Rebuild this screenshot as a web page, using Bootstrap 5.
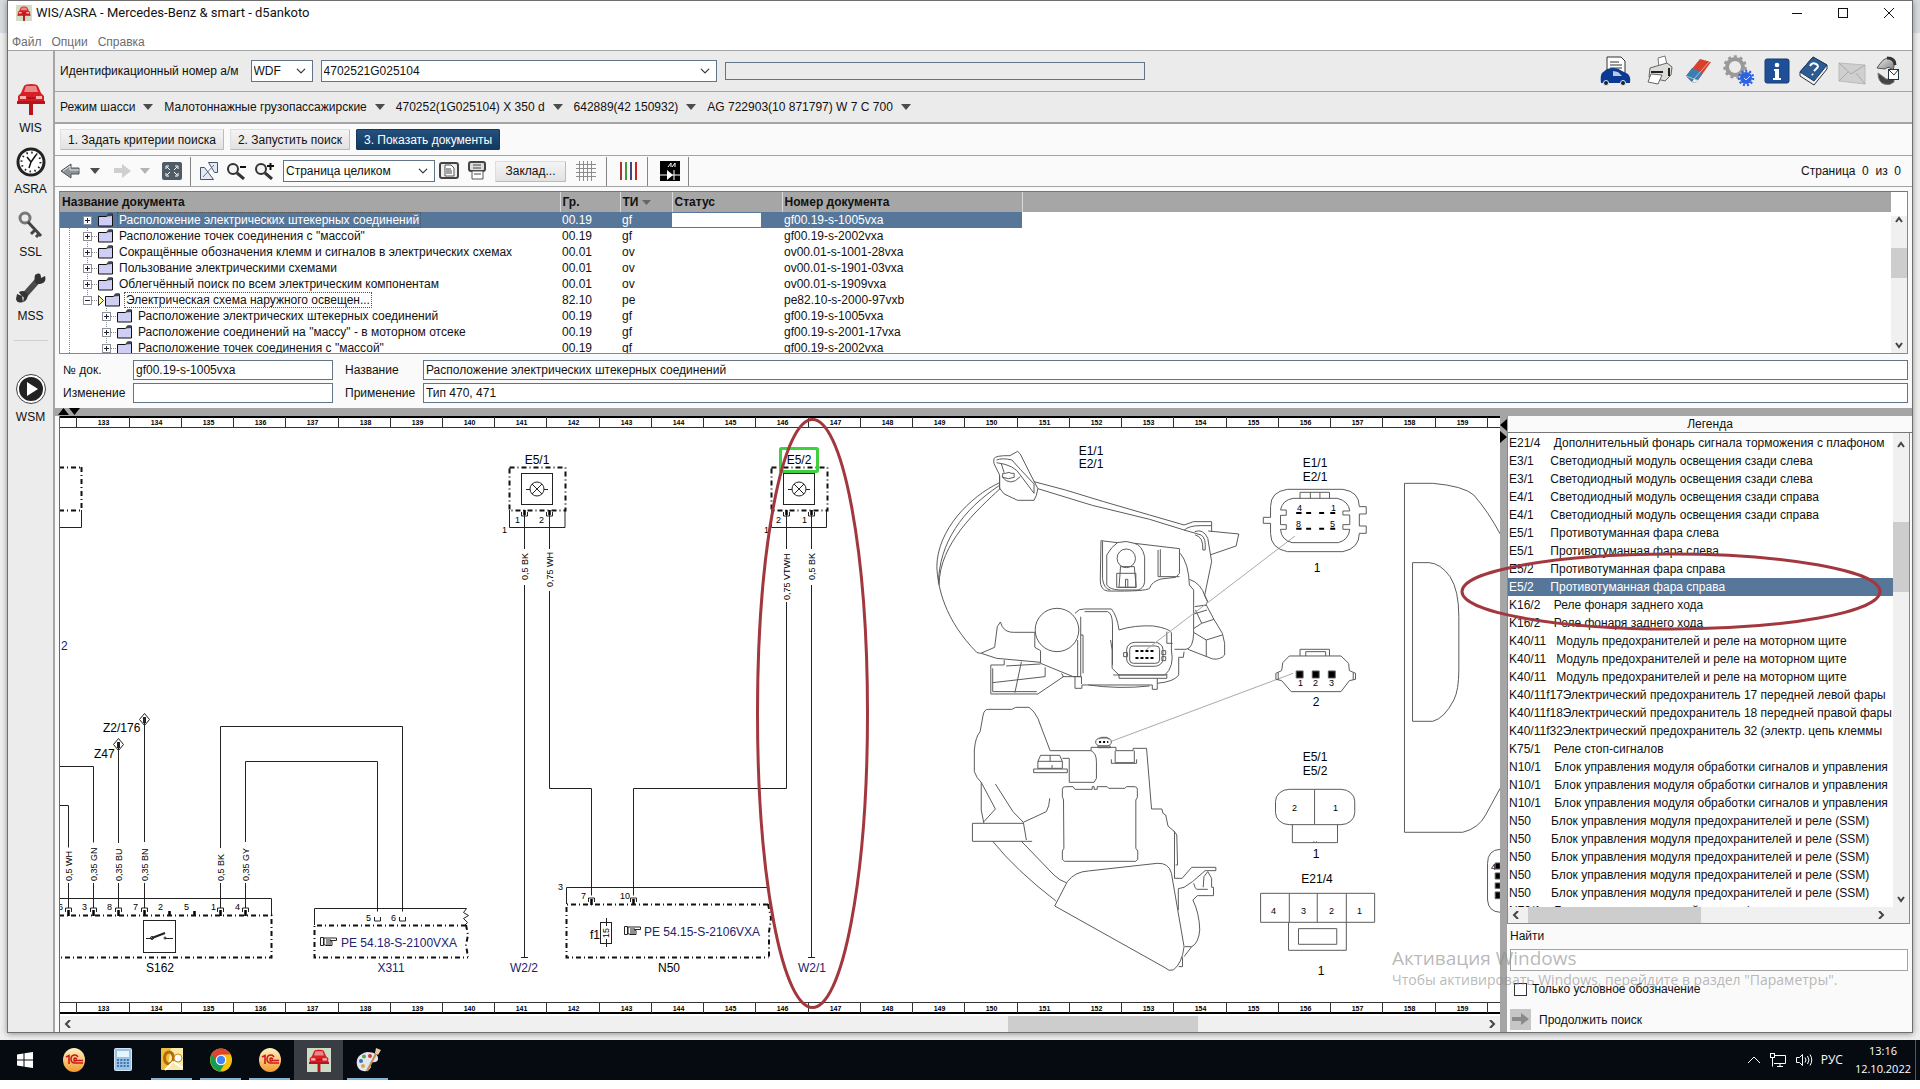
<!DOCTYPE html>
<html lang="ru">
<head>
<meta charset="utf-8">
<meta name="viewport" content="width=device-width, initial-scale=1">
<title>WIS/ASRA - Mercedes-Benz &amp; smart - d5ankoto</title>
<link href="https://cdn.jsdelivr.net/npm/bootstrap@5.3.0/dist/css/bootstrap.min.css" rel="stylesheet">
<style>
:root{--ui:"Liberation Sans",Arial,sans-serif;--seg:"Open Sans","Noto Sans",sans-serif;--line:#a3a5a5;--sel:#57779a}
body{font-family:var(--ui);font-size:12px;line-height:16px;color:#111;height:100vh;min-height:800px;overflow:hidden;background:#fff;position:relative}
.desk{background:linear-gradient(#d8dbde 33px,#efefef 33px);padding:0 7px 7px}
.win{border:1px solid #6e6e6e;background:#fafafa;box-shadow:0 1px 6px #0006;min-height:0}
.titlebar{height:32px;background:#fff;font:13px/20px Roboto,var(--seg);padding:0 12px 8px 8px;flex:none}
.menubar{height:18px;background:#fff;border-bottom:1px solid var(--line);padding-left:4px;gap:10px;flex:none}
.menubar a{color:#6d6d6d;text-decoration:none}
.winbtn,.flat{border:0;background:none;padding:0;display:flex;align-items:center;justify-content:center;color:inherit}
.shell,.legend-rows{min-height:0}
.side{width:47px;background:#ececec;border-right:2px solid #a5a5a5;padding-top:26px;flex:none}
.side button{height:63px;width:100%;flex-direction:column;gap:4px}
.side hr{width:34px;margin:11px auto 26px;border-color:#777}
.main{min-width:0;min-height:0}
.bar{padding:0 11px 0 5px;flex:none}
.bar-vin{height:41px;background:#ebebeb;border-bottom:1px solid var(--line)}
.bar-car{height:32px;background:#ebebeb;border-bottom:2px solid var(--line);gap:11px}
.bar-step{height:32px;border-bottom:1px solid var(--line);gap:6px}
.bar-tool{height:31px;border-bottom:1px solid var(--line)}
.bar-car button{gap:8px}
.topicons{gap:9px}
.form-select,.form-control{border-radius:0;border:1px solid #627487;font:12px/16px var(--ui);color:#111;padding:0 2px;min-height:0;height:20px;background-color:#fff}
.form-select{height:22px;padding:0 20px 0 2px;background-position:right 6px center;background-size:10px 10px}
.vin-kind{width:62px}.vin-code{width:396px}.vin-note{width:420px;height:18px;background:#ebebeb!important}
.zoomsel{width:152px}
.step,.mark-btn{border:1px solid #dedede;border-right-color:#bbb;border-bottom-color:#bbb;background:linear-gradient(#f4f4f4,#e2e2e2);height:21px;padding:0 7px;font-size:12px;line-height:18px;color:#111;border-radius:1px}
.mark-btn{width:71px}
.step.on{background:linear-gradient(#24507c,#123a60);color:#fff;border-color:#123a60}
.vsep{width:1px;height:29px;background:#858585}
.docs{margin:4px 4px 0;height:163px;border:1px solid #85898c;border-top-color:#777;background:#fff;flex:none}
.docs-view{overflow:hidden;min-width:0}
.doctable{table-layout:fixed;width:100%;border-collapse:collapse}
.doctable th{background:#a6a6a6;height:20px;padding:0 2px;font-weight:700;border-right:1px solid #d8d8d8;line-height:19px}
.doctable th:last-child{border:0}
.doctable td{height:16px;padding:0 2px;white-space:nowrap;line-height:16px}
.doctable td:first-child{padding:0}
.treecell{display:flex;height:16px}
.doctable .picked td{background:var(--sel);color:#fff}
.doctable .picked td:last-child{background:#fff}
.dots{outline:1px dotted #555;outline-offset:-1px;padding:0 2px;margin-left:-2px}
.statusbox{display:block;height:14px;width:89px;background:#fff;margin-left:-2px}
.scroll-v{width:16px;background:#f0f0f0;display:flex;flex-direction:column;align-items:center}
.scroll-h{height:16px;background:#f0f0f0;display:flex;align-items:center;flex:none}
.thumb{background:#cdcdcd}
.propgrid{display:grid;grid-template-columns:64px 200px 78px 1fr;gap:3px 6px;padding:6px 4px 5px 8px;align-items:center;flex:none}
.propgrid label{line-height:16px;white-space:nowrap}
.propgrid label.far{padding-left:6px}
.splitter{height:8px;background:#a5a5a5;padding-left:3px;flex:none}
.work{min-height:0}
.canvas-col{min-width:0;margin-left:4px;border-left:1px solid #666;background:#fff}
.canvas-view{min-height:0;overflow:hidden}
.canvas-view svg{display:block;width:100%;height:100%}
.split-v{width:7px;background:#a5a5a5;flex:none}
.legend{width:405px;flex:none;background:#fafafa}
.legend-head{height:17px;line-height:17px;border-bottom:1px solid #777;border-left:1px solid #999;text-align:center;flex:none}
.legend-box{border:1px solid #85898c;border-top:0;min-height:0;margin-right:2px;background:#f0f0f0}
.legend-list{list-style:none;margin:0;padding:1px 0 0;background:#fff;overflow:hidden;min-width:0}
.legend-list li{white-space:pre;height:18px;line-height:18px;padding-left:1px;flex:none;overflow:hidden}
.legend-list .on{background:var(--sel);color:#fff}
.finder{height:108px;padding:4px 4px 4px 3px;flex:none}
.finder .form-control{height:22px;border-color:#a3a3a3;margin:5px 0 10px}
.tick{appearance:none;width:13px;height:13px;border:1px solid #333;background:#fff;margin:0 5px 0 4px}
.next{width:21px;height:21px;background:#c6c6c6}
.taskbar{height:40px;background:#060a11;color:#fff;font-family:var(--seg);flex:none;margin-bottom:9px}
.task{width:49px;height:40px;position:relative}
.task.open::after{content:"";position:absolute;left:4px;right:4px;bottom:0;height:2px;background:#87b4d2}
.task.now{background:#3a3e43}
.clock{font-size:11px;line-height:18px;text-align:center}
.deskedge{width:5px;height:40px;border-left:1px solid #555}
.over{position:absolute;inset:0;width:100%;height:100%;pointer-events:none}
svg{flex:none}
svg text{font-family:var(--ui)}
.wires text{font-size:12px}
.wires .s text{font-size:9px}
.wires .r{font-size:7px;font-weight:700;text-anchor:middle}
.wires .b{fill:#22226e}
.wires .m{text-anchor:middle}
.art path,.art rect,.art ellipse{vector-effect:non-scaling-stroke}
.over .wm{font-family:var(--seg);fill:#8c8c8c;fill-opacity:.62}
</style>
<script src="https://cdn.jsdelivr.net/npm/bootstrap@5.3.0/dist/js/bootstrap.bundle.min.js"></script>
</head>
<body class="d-flex flex-column">

<svg width="0" height="0" class="position-absolute" aria-hidden="true">
  <defs>
    <linearGradient id="steel" x1="0" y1="0" x2="1" y2="1"><stop offset="0" stop-color="#eee"/><stop offset="1" stop-color="#777"/></linearGradient>
    <linearGradient id="org" x1="0" y1="0" x2="0" y2="1"><stop offset="0" stop-color="#fff3c4"/><stop offset="1" stop-color="#f39a2c"/></linearGradient>
    <symbol id="fold" viewBox="0 0 16 16"><path d="M1 4.500h8l2-2.500h4v12H1z" fill="#cfcff5" stroke="#111"/><path d="M9 4.500l2-3h4v2.500z" fill="#445"/></symbol>
    <symbol id="plus" viewBox="0 0 9 9"><rect x=".5" y=".5" width="8" height="8" fill="#fff" stroke="#8a8f99"/><path d="M2 4.500h5M4.500 2v5" stroke="#223"/></symbol>
    <symbol id="minus" viewBox="0 0 9 9"><rect x=".5" y=".5" width="8" height="8" fill="#fff" stroke="#8a8f99"/><path d="M2 4.500h5" stroke="#223"/></symbol>
    <symbol id="n0" viewBox="0 0 59 16"><use href="#plus" x="23" y="4" width="9" height="9"/><use href="#fold" x="37" width="17" height="16"/></symbol>
    <symbol id="n1" viewBox="0 0 59 16"><path d="M9.500 0v16M27.500 0v16M32 8.500h5" stroke="#888" stroke-dasharray="1 1"/><use href="#plus" x="23" y="4" width="9" height="9"/><use href="#fold" x="37" width="17" height="16"/></symbol>
    <symbol id="nopen" viewBox="0 0 66 16"><path d="M9.500 0v16M27.500 0v4M32 8.500h5" stroke="#888" stroke-dasharray="1 1"/><use href="#minus" x="23" y="4" width="9" height="9"/><path d="M38.500 3.500v10l5-5z" fill="#ffff8c" stroke="#333"/><use href="#fold" x="44" width="17" height="16"/></symbol>
    <symbol id="n2" viewBox="0 0 78 16"><path d="M9.500 0v16M46.500 0v16M51 8.500h5" stroke="#888" stroke-dasharray="1 1"/><use href="#plus" x="42" y="4" width="9" height="9"/><use href="#fold" x="56" width="17" height="16"/></symbol>
    <symbol id="dn" viewBox="0 0 10 6"><path d="M0 0h10L5 6z" fill="#4c4c4c"/></symbol>
    <symbol id="lift" viewBox="0 0 28 32"><path d="M4 10L7 3Q8 1 14 1t7 2l3 7 3 3v6H1v-6z" fill="#d81f26"/><path d="M7 9l2-6h10l2 6z" fill="#e98a8a"/><path d="M0 18h28v3H0zM12 21h4v11h-4z" fill="#b5161c"/><path d="M3 13h6v3H3zM19 13h6v3h-6z" fill="#ffb3b3"/><path d="M10 15h8" stroke="#7c0d10"/></symbol>
    <symbol id="onec" viewBox="0 0 22 24"><ellipse cx="11" cy="12" rx="11" ry="12" fill="url(#org)"/><path d="M3 9l3-1.500V16M15 9q-1-2-3-2-4 0-4 4t4 4h8M14 11q-3-2-3 .5t2 1h7" fill="none" stroke="#d0181c" stroke-width="1.600"/></symbol>
    <symbol id="up" viewBox="0 0 8 8"><path d="M1 6l3-4 3 4" fill="none" stroke="#444" stroke-width="2"/></symbol>
    <symbol id="down" viewBox="0 0 8 8"><path d="M1 2l3 4 3-4" fill="none" stroke="#444" stroke-width="2"/></symbol>
    <symbol id="left" viewBox="0 0 8 8"><path d="M6 0L2 4l4 4" fill="none" stroke="#444" stroke-width="2"/></symbol>
    <symbol id="right" viewBox="0 0 8 8"><path d="M2 0l4 4-4 4" fill="none" stroke="#444" stroke-width="2"/></symbol>
  </defs>
</svg>

<div class="desk d-flex flex-column flex-grow-1 overflow-hidden">
<div class="win d-flex flex-column flex-grow-1">
  <header class="titlebar d-flex align-items-center">
    <svg width="16" height="16" class="me-1"><rect width="16" height="16" fill="#d5dcc4"/><use href="#lift" x="1" y="1" width="14" height="15"/></svg>
    <span class="me-auto">WIS/ASRA - Mercedes-Benz &amp; smart - d5ankoto</span>
    <button class="winbtn me-4" aria-label="Свернуть"><svg width="22" height="12"><path d="M6 6.500h10" stroke="#111"/></svg></button>
    <button class="winbtn me-4" aria-label="Развернуть"><svg width="22" height="12"><rect x="6.500" y="1.500" width="9" height="9" fill="none" stroke="#111"/></svg></button>
    <button class="winbtn" aria-label="Закрыть"><svg width="22" height="12"><path d="M6 1l10 10M16 1L6 11" stroke="#111"/></svg></button>
  </header>
  <nav class="menubar d-flex align-items-center"><a href="#">Файл</a><a href="#">Опции</a><a href="#">Справка</a></nav>

  <div class="shell d-flex flex-grow-1">
    <aside class="side">
      <button class="flat"><svg width="30" height="34"><use href="#lift" x="1" y="1" width="28" height="32"/></svg>WIS</button>
      <button class="flat"><svg width="30" height="30"><circle cx="15" cy="15" r="13" fill="#fff" stroke="#222" stroke-width="3"/><circle cx="15" cy="15" r="9.500" fill="none" stroke="#222" stroke-width="2" stroke-dasharray="1.500 3.470"/><path d="M15 15l5-7M15 15l-4-5M15 15l-2 6" stroke="#111" stroke-width="1.500"/></svg>ASRA</button>
      <button class="flat"><svg width="30" height="30"><circle cx="9" cy="8" r="5" fill="none" stroke="#777" stroke-width="3"/><path d="M12 12l13 14M19 20l-4 4M23 24l-3 3" stroke="#444" stroke-width="3"/></svg>SSL</button>
      <button class="flat"><svg width="32" height="32"><path d="M8 25L24 7" stroke="#4a4a4a" stroke-width="6"/><path d="M20 3q6-4 6 3l4-2q2 7-5 8t-5-9zM2 22l5 2 1 6q-6 2-7-3zM4 20q6-3 9 3-1 6-5 7l1-5-4-3z" fill="#333"/></svg>MSS</button>
      <hr>
      <button class="flat"><svg width="32" height="32"><circle cx="16" cy="16" r="13" fill="#222" stroke="#fff" stroke-width="2"/><circle cx="16" cy="16" r="14.500" fill="none" stroke="#444"/><path d="M12 9l11 7-11 7z" fill="#fff"/></svg>WSM</button>
    </aside>

    <main class="main d-flex flex-column flex-grow-1">
      <div class="bar bar-vin d-flex align-items-center">
        <label for="kind" class="me-2 pe-1">Идентификационный номер а/м</label>
        <select id="kind" class="form-select vin-kind me-2"><option>WDF</option></select>
        <select class="form-select vin-code me-2" aria-label="Номер"><option>4702521G025104</option></select>
        <input class="form-control vin-note me-auto" aria-label="Примечание" readonly>
        <div class="topicons d-flex align-items-center">
          <button class="flat me-1" aria-label="Данные а/м"><svg width="32" height="32"><path d="M7 2h14l4 4v12H7z" fill="#fff" stroke="#333"/><path d="M10 7h9M10 10h12M10 13h12" stroke="#333"/><path d="M1 28q-1-7 1-10l5-4q9-3 15 2l6 3q3 3 2 9z" fill="#0c3a92"/><path d="M13 16v5l9 0-4-4z" fill="#b8c9ee"/><circle cx="6" cy="28" r="2.500" fill="#123" stroke="#dfe6f5"/><circle cx="23" cy="28" r="2.500" fill="#123" stroke="#dfe6f5"/></svg></button>
          <button class="flat" aria-label="Печать"><svg width="30" height="32"><path d="M13 3l7-2 2 9-8 3z" fill="#fff" stroke="#777"/><path d="M5 13l17-5 5 4-1 8-6 6-16-4z" fill="#dcdcd8" stroke="#666"/><path d="M6 17h12M24 13v8" stroke="#222" stroke-width="2"/><path d="M6 19l11 1-4 9-10-2z" fill="#fff" stroke="#666"/></svg></button>
          <button class="flat" aria-label="Очистить"><svg width="30" height="30"><path d="M2 20L16 3l11 3-13 18q-2 4-6 2z" fill="#d8402e"/><path d="M2 20l6-8 11 5-5 7q-2 4-6 2z" fill="#3b7fb0"/><path d="M2 20l8 3 16-18" fill="none" stroke="#fff8"/><path d="M14 24q-2 4-6 2l2-3z" fill="#eee"/></svg></button>
          <button class="flat" aria-label="Настройки"><svg width="32" height="32"><circle cx="12" cy="12" r="8" fill="none" stroke="#999" stroke-width="4"/><circle cx="12" cy="12" r="10.500" fill="none" stroke="#999" stroke-width="2.500" stroke-dasharray="3 3"/><circle cx="23" cy="23" r="6" fill="#2f62e0"/><circle cx="23" cy="23" r="7" fill="none" stroke="#2f62e0" stroke-width="2.500" stroke-dasharray="2 2"/><path d="M21 23l2 2 4-4" stroke="#cfe0ff" fill="none"/></svg></button>
          <button class="flat" aria-label="Информация"><svg width="26" height="28"><rect x="1" y="2" width="24" height="24" rx="2" fill="#1f4f96" stroke="#163a70"/><path d="M10 12h5v9h2v2H9v-2h2v-7h-1z" fill="#fff"/><circle cx="13" cy="8" r="2.300" fill="#fff"/></svg></button>
          <button class="flat" aria-label="Справка"><svg width="30" height="30"><path d="M1 16L14 1l14 8v4L15 29 1 20z" fill="#f0f0f0" stroke="#333"/><path d="M1 16L14 1l14 8-13 16z" fill="#2c5c92" stroke="#173b66"/><path d="M11 10q2-4 6-2t0 5l-2 2M13 18l1 1" stroke="#fff" stroke-width="2" fill="none"/></svg></button>
          <button class="flat" aria-label="Почта" disabled><svg width="28" height="30"><path d="M1 7l26 2v19L1 25z" fill="#cfcfcf" stroke="#bbb"/><path d="M1 7l12 11L27 9M1 25l9-9M27 28l-9-11" fill="none" stroke="#aaa"/></svg></button>
          <button class="flat" aria-label="Обмен"><svg width="26" height="32"><path d="M4 10Q12-2 20 6l-2 10q-4-6-8-2l-8-1z" fill="url(#steel)" stroke="#555"/><path d="M3 18q6 4 8 6h8v3q-4 4-10 2T3 18z" fill="#444" stroke="#777"/><path d="M12 3q8 0 8 7" stroke="#333" stroke-width="3" fill="none"/><rect x="13.500" y="14.500" width="10" height="10" fill="#fff" stroke="#234"/><path d="M14 15l5 5 4-5" fill="none" stroke="#234"/></svg></button>
        </div>
      </div>
      <div class="bar bar-car d-flex align-items-center">
        <button class="flat">Режим шасси<svg width="10" height="6"><use href="#dn"/></svg></button>
        <button class="flat">Малотоннажные грузопассажирские<svg width="10" height="6"><use href="#dn"/></svg></button>
        <button class="flat">470252(1G025104) X 350 d<svg width="10" height="6"><use href="#dn"/></svg></button>
        <button class="flat">642889(42 150932)<svg width="10" height="6"><use href="#dn"/></svg></button>
        <button class="flat">AG 722903(10 871797) W 7 C 700<svg width="10" height="6"><use href="#dn"/></svg></button>
      </div>
      <div class="bar bar-step d-flex align-items-center">
        <button class="step">1. Задать критерии поиска</button>
        <button class="step">2. Запустить поиск</button>
        <button class="step on">3. Показать документы</button>
      </div>
      <div class="bar bar-tool d-flex align-items-center">
        <button class="flat me-2" aria-label="Назад"><svg width="22" height="18"><path d="M1 9l10-7v4h8v6h-8v4z" fill="#8d9498" stroke="#4d5558"/><path d="M3 9l7-5v4h9" fill="none" stroke="#dfe6e8"/></svg></button>
        <button class="flat me-2 pe-1" aria-label="История назад"><svg width="10" height="6"><use href="#dn"/></svg></button>
        <button class="flat me-1" aria-label="Вперёд" disabled><svg width="20" height="18"><path d="M19 9L10 2v4H2v5h8v5z" fill="#cfcfcf"/></svg></button>
        <button class="flat me-2 ps-1" aria-label="История вперёд" disabled><svg width="10" height="6" opacity=".4"><use href="#dn"/></svg></button>
        <button class="flat me-2 ps-1" aria-label="Весь экран"><svg width="20" height="18"><rect width="20" height="18" rx="2" fill="#4f5c66"/><path d="M4 7V4h3M13 4h3v3M16 11v3h-3M7 14H4v-3M5 5l3 3M15 5l-3 3M5 13l3-3M15 13l-3-3" stroke="#fff" fill="none"/></svg></button>
        <span class="vsep me-2"></span>
        <button class="flat me-2" aria-label="Повернуть"><svg width="20" height="20"><path d="M1.500 6.500h4l9 12h-13zM9.500 1.500h9v10h-3z" fill="#e4e9f5" stroke="#456"/><path d="M4 16l11-12" stroke="#678"/></svg></button>
        <button class="flat me-2" aria-label="Уменьшить"><svg width="20" height="18"><circle cx="6" cy="7" r="5" fill="#f5f5f5" stroke="#333" stroke-width="2"/><path d="M10 11l7 6" stroke="#333" stroke-width="3"/><path d="M13 5h6" stroke="#111" stroke-width="2"/></svg></button>
        <button class="flat me-2" aria-label="Увеличить"><svg width="20" height="18"><circle cx="6" cy="7" r="5" fill="#f5f5f5" stroke="#333" stroke-width="2"/><path d="M10 11l7 6" stroke="#333" stroke-width="3"/><path d="M12 4h7M15.500 1v7" stroke="#111" stroke-width="2"/></svg></button>
        <select class="form-select zoomsel me-1" aria-label="Масштаб"><option>Страница целиком</option></select>
        <button class="flat me-2" aria-label="Книга"><svg width="20" height="18"><rect x="1" y="1" width="18" height="15" rx="2" fill="#eee" stroke="#444" stroke-width="2"/><path d="M6 3h6l3 3v8H6z" fill="#fff" stroke="#555"/><path d="M7 7h5M7 9h6M7 11h6" stroke="#444"/></svg></button>
        <button class="flat me-2" aria-label="Лента"><svg width="20" height="20"><rect x="2" y="1" width="16" height="9" rx="2" fill="#ddd" stroke="#444" stroke-width="2"/><path d="M5 10h11v8H5z" fill="#fff" stroke="#555"/><path d="M6 4h8M6 7h8M7 13h7" stroke="#444"/></svg></button>
        <button class="mark-btn me-2">Заклад...</button>
        <button class="flat me-2" aria-label="Сетка"><svg width="24" height="24"><path d="M5.500 2v20M9.500 2v20M13.500 2v20M17.500 2v20M2 5.500h20M2 9.500h20M2 13.500h20M2 17.500h20" stroke="#8c8c8c"/></svg></button>
        <span class="vsep me-2"></span>
        <button class="flat me-2 ps-1" aria-label="Цвета"><svg width="20" height="18"><path d="M2 0v18" stroke="#a33" stroke-width="2"/><path d="M7 0v18" stroke="#493" stroke-width="2"/><path d="M12 0v18" stroke="#447" stroke-width="2"/><path d="M17 0v18" stroke="#c22" stroke-width="2"/></svg></button>
        <span class="vsep me-2"></span>
        <button class="flat me-2 ps-1" aria-label="Схема"><svg width="20" height="20"><rect width="20" height="20" fill="#000"/><path d="M0 14h20M14 9v10M8 6l3-4v4M12 6l3-4v4" stroke="#fff" fill="none"/><path d="M7 9v10l6-5z" fill="#fff"/></svg></button>
        <span class="vsep me-auto"></span>
        <span>Страница&nbsp; 0&nbsp; из&nbsp; 0</span>
      </div>

      <section class="docs d-flex">
        <div class="docs-view flex-grow-1">
          <table class="doctable">
            <colgroup><col style="width:500px"><col style="width:60px"><col style="width:52px"><col style="width:110px"><col style="width:240px"><col></colgroup>
            <thead><tr><th>Название документа</th><th>Гр.</th><th>ТИ <svg width="9" height="5"><path d="M0 0h9L4.500 5z" fill="#666"/></svg></th><th>Статус</th><th>Номер документа</th><th></th></tr></thead>
            <tbody>
              <tr class="picked"><td><div class="treecell"><svg width="59" height="16"><use href="#n0"/></svg><span class="dots">Расположение электрических штекерных соединений</span></div></td><td>00.19</td><td>gf</td><td><span class="statusbox"></span></td><td>gf00.19-s-1005vxa</td><td></td></tr>
              <tr><td><div class="treecell"><svg width="59" height="16"><use href="#n1"/></svg>Расположение точек соединения с "массой"</div></td><td>00.19</td><td>gf</td><td></td><td>gf00.19-s-2002vxa</td><td></td></tr>
              <tr><td><div class="treecell"><svg width="59" height="16"><use href="#n1"/></svg>Сокращённые обозначения клемм и сигналов в электрических схемах</div></td><td>00.01</td><td>ov</td><td></td><td>ov00.01-s-1001-28vxa</td><td></td></tr>
              <tr><td><div class="treecell"><svg width="59" height="16"><use href="#n1"/></svg>Пользование электрическими схемами</div></td><td>00.01</td><td>ov</td><td></td><td>ov00.01-s-1901-03vxa</td><td></td></tr>
              <tr><td><div class="treecell"><svg width="59" height="16"><use href="#n1"/></svg>Облегчённый поиск по всем электрическим компонентам</div></td><td>00.01</td><td>ov</td><td></td><td>ov00.01-s-1909vxa</td><td></td></tr>
              <tr><td><div class="treecell"><svg width="66" height="16"><use href="#nopen"/></svg><span class="dots">Электрическая схема наружного освещен...</span></div></td><td>82.10</td><td>pe</td><td></td><td>pe82.10-s-2000-97vxb</td><td></td></tr>
              <tr><td><div class="treecell"><svg width="78" height="16"><use href="#n2"/></svg>Расположение электрических штекерных соединений</div></td><td>00.19</td><td>gf</td><td></td><td>gf00.19-s-1005vxa</td><td></td></tr>
              <tr><td><div class="treecell"><svg width="78" height="16"><use href="#n2"/></svg>Расположение соединений на "массу" - в моторном отсеке</div></td><td>00.19</td><td>gf</td><td></td><td>gf00.19-s-2001-17vxa</td><td></td></tr>
              <tr><td><div class="treecell"><svg width="78" height="16"><use href="#n2"/></svg>Расположение точек соединения с "массой"</div></td><td>00.19</td><td>gf</td><td></td><td>gf00.19-s-2002vxa</td><td></td></tr>
            </tbody>
          </table>
        </div>
        <div class="scroll-v bg-white"><div class="scroll-v flex-grow-1 mt-4 pb-1"><svg width="8" height="8"><use href="#up"/></svg><div class="thumb w-100 mt-4" style="height:30px"></div><svg width="8" height="8" class="mt-auto"><use href="#down"/></svg></div></div>
      </section>

      <div class="propgrid">
        <label for="fdoc">№ док.</label><input id="fdoc" class="form-control" value="gf00.19-s-1005vxa">
        <label for="fname" class="far">Название</label><input id="fname" class="form-control" value="Расположение электрических штекерных соединений">
        <label for="fchg">Изменение</label><input id="fchg" class="form-control">
        <label for="fuse" class="far">Применение</label><input id="fuse" class="form-control" value="Тип 470, 471">
      </div>
      <div class="splitter"><svg width="24" height="7" class="d-block"><path d="M0 7h11L5.500 0zM11 0h11l-5.500 7z" fill="#000"/></svg></div>

      <div class="work d-flex flex-grow-1">
        <div class="canvas-col d-flex flex-column flex-grow-1">
          <div class="canvas-view flex-grow-1">
          <svg class="wires">
           <g transform="translate(-60 -416)">
            <g id="ruler" stroke="#333" fill="none"><path d="M59 417h1841M59 1013h1841" stroke="#000" stroke-width="2"/><path d="M59 427.500h1841M59 1002.500h1841"/></g>
            <g fill="none" stroke="#222">
              <path d="M81.500 510v17.500H59M509.500 510v17.500h55.500v-17.500M771.500 510v17.500h55v-17.500"/>
              <path d="M524.500 514v35M524.500 585v372M521 957.500h7M549.500 514v35M549.500 591v197.500h42v107M786.500 514v35M786.500 602v186.500h-153v107M811.500 514v35M811.500 585v372M808 957.500h7"/>
              <path d="M59 805.500h9.500v42M59 766.500h34.500v76M118.500 745v98M144.500 720v122M220.500 848V726.500h182v185M245.500 842V761.500h132v150M68.500 883v25M93.500 883v25M118.500 883v25M144.500 883v25M220.500 883v25M245.500 883v25"/>
              <path d="M59 898.500h212.500v17M314.500 925v-16.500h152l-3 4 5 3-5 3 4 4-3 3M566.500 904v-16.500h202v6"/>
              <path d="M118.500 738.500l5 6-5 6-5-6zM144.500 713.500l5 6-5 6-5-6z"/><path d="M118.500 742v6M144.500 717v6" stroke-width="3"/>
              <rect x="521.500" y="473.500" width="31" height="31"/><circle cx="537" cy="489" r="7"/><path d="M526 489.500h4M544 489.500h4M532 484l10 10M542 484l-10 10"/>
              <rect x="783.500" y="473.500" width="31" height="31"/><circle cx="799" cy="489" r="7"/><path d="M788 489.500h4M806 489.500h4M794 484l10 10M804 484l-10 10"/>
              <rect x="143.500" y="920.500" width="32" height="32"/><path d="M146 938.500h6M165 938.500h8"/><path d="M152 938l13-5" stroke-width="2"/><circle cx="152" cy="938" r="1.500"/><circle cx="165" cy="938" r="1"/>
              <rect x="600.500" y="922.500" width="11" height="21"/><path d="M606.500 918v8M606.500 939v8"/>
              <path d="M521.500 512v4h6v-4M546.500 512v4h6v-4M783.500 512v4h6v-4M808.500 512v4h6v-4M65.500 912v-4h6v4M90.500 912v-4h6v4M115.500 912v-4h6v4M141.500 912v-4h6v4M217.500 912v-4h6v4M242.500 912v-4h6v4M588.500 902v-4h6v4M630.500 902v-4h6v4M374.500 917v4h6v-4M399.500 917v4h6v-4"/>
              <path d="M524.500 510v5M549.500 510v5M786.500 510v5M811.500 510v5M68.500 910v6M93.500 910v6M118.500 910v6M144.500 910v6M169.500 911v5M194.500 911v5M220.500 910v6M245.500 910v6M591.500 899v6M633.500 899v6" stroke="#000" stroke-width="2.500"/>
              <g stroke="#111" stroke-width="2" stroke-dasharray="5 3 1 3">
                <path d="M59 467.500h22.500M81.500 467v43M59 510.500h22.500M509.500 467.500h56v43h-56zM771.500 467.500h56v43h-56zM59 915.500h212.500v42H59M466 925.500H314.500v32H468M768 904.500H566.500v53h202M466 925l2 10-2 10 2 12M768 904l3 14-2 14v26"/>
              </g>
            </g>
            <g><text class="m" x="537" y="464">E5/1</text><text class="m" x="799" y="464">E5/2</text><text class="b" x="61" y="650">2</text>
              <text x="103" y="732">Z2/176</text><text x="94" y="758">Z47</text><text class="m" x="160" y="972">S162</text><text class="m b" x="391" y="972">X311</text><text class="m b" x="524" y="972">W2/2</text><text class="m" x="669" y="972">N50</text><text class="m b" x="812" y="972">W2/1</text>
              <text class="b" x="341" y="947">PE 54.18-S-2100VXA</text><text class="b" x="644" y="936">PE 54.15-S-2106VXA</text>
              <text x="590" y="939">f1</text><text class="m" x="1091" y="455">E1/1</text><text class="m" x="1091" y="468">E2/1</text><text class="m" x="1315" y="467">E1/1</text><text class="m" x="1315" y="481">E2/1</text><text class="m" x="1315" y="761">E5/1</text><text class="m" x="1315" y="775">E5/2</text><text class="m" x="1317" y="883">E21/4</text>
              <g class="s"><text x="515" y="523">1</text><text x="539" y="523">2</text><text x="502" y="533">1</text><text x="776" y="523">2</text><text x="802" y="523">1</text><text x="764" y="533">1</text>
              <text x="58" y="910">6</text><text x="82" y="910">3</text><text x="107" y="910">8</text><text x="133" y="910">7</text><text x="158" y="910">2</text><text x="184" y="910">5</text><text x="211" y="910">1</text><text x="235" y="910">4</text><text x="366" y="921">5</text><text x="391" y="921">6</text><text x="558" y="890">3</text><text x="581" y="899">7</text><text x="620" y="899">10</text>
              <text x="1297" y="511">4</text><text x="1331" y="511">1</text><text x="1296" y="527">8</text><text x="1330" y="527">5</text><text x="1298" y="686">1</text><text x="1313" y="686">2</text><text x="1329" y="686">3</text><text x="1292" y="811">2</text><text x="1333" y="811">1</text><text x="1271" y="914">4</text><text x="1301" y="914">3</text><text x="1329" y="914">2</text><text x="1357" y="914">1</text><text x="1491" y="870">4</text>
              <text transform="translate(528 580) rotate(-90)">0,5 BK</text><text transform="translate(553 587) rotate(-90)">0,75 WH</text><text transform="translate(790 600) rotate(-90)">0,75 VTWH</text><text transform="translate(815 580) rotate(-90)">0,5 BK</text>
              <text transform="translate(72 881) rotate(-90)">0,5 WH</text><text transform="translate(97 881) rotate(-90)">0,35 GN</text><text transform="translate(122 881) rotate(-90)">0,35 BU</text><text transform="translate(148 881) rotate(-90)">0,35 BN</text><text transform="translate(224 881) rotate(-90)">0,5 BK</text><text transform="translate(249 881) rotate(-90)">0,35 GY</text><text transform="translate(609 938) rotate(-90)">15</text></g>
              <text class="m" x="1317" y="572">1</text><text class="m" x="1316" y="706">2</text><text class="m" x="1316" y="858">1</text><text class="m" x="1321" y="975">1</text>
            </g>
            <g fill="#fff" stroke="#222"><path id="hand" d="M320.500 937.500h3v8h-3zM324 938h12.500v2.500H330l2 1v4h-6l-2-1zM326 940h5M326 942h5M326 944h5"/><use href="#hand" x="304" y="-11"/></g>

            <g class="art" fill="none" stroke="#5c5c5c" transform="translate(920 410) scale(.3827 .3333)">
              <path d="M193 146Q198 136 235 137L255 124l7 8 23 53 23 51-4 20-6 15H255L220 252l-12-17V195L193 160zM200 150q15-7 40 0l22 28 36 44v28l-36-55q-14-30-62-37M212 160l8 28M216 190h8q10-6 14 0h8v12q-14 8-30 0zM214 200q22 32 48 0M208 198v40"/>
              <path d="M208 218C130 260 45 360 44 470c2 60 20 160 105 258l10 2 36-18 7-62 8-14 5 14q10 18 30 17h55M210 235C150 300 50 400 50 525M208 226C110 300 50 400 48 520"/>
              <path d="M298 215l82 25 100 35 120 40 90 30 25-10h47v12h-30q-30 0-42 14M308 236l142 50 150 42 90 32 45 15q13 10 10 45h-6q2-40-20-45M718 365q22-10 34 20l10 70-18 100 7 20-5 12M753 363l80 9-7 36-66 26M762 346v20"/>
              <path d="M473 392l42 6q25-8 45 2l118 16v74l-10 12-38 5q-25 8-30 28-10 10-110 8-19-3-19-33zM477 394v112q3 30 20 34M516 398q-16 12-28 37v90q7 13 32 15h50q15-5 17-25v-75q-7-35-27-40M524 470l-4 62h45l-5-62zM514 490v42h50v-42zM537 532v-24h6v24M622 420v80h6v-82M628 500h50"/><ellipse cx="539" cy="445" rx="24" ry="28"/>
              <path d="M680 430q22 30 24 95l11 15v130q-1 45-20 48h-30M704 508q31 12 41 52l7 15M718 590l30-5 20 43 22 42 6 30v35q-11 15-31 12l-65-29M716 612l34-12M716 655l20-15 32-12M716 668l32 22 42-15M748 690v50M736 640l-16-40"/>
              <ellipse cx="358" cy="660" rx="57" ry="65"/>
              <path d="M300 667v45l15 10v38l85 40h20V620M405 610q10-15 25-13h70q15 20 20 63 40-15 90-12 40 7 47 20v52q8 50-17 75H520l-18-20v-55l-4-30M430 605h60q13 5 13 40v120M426 790V675h-6M412 800V690M505 795h140M645 665v35h15"/>
              <path d="M160 730l40 15 115 12M185 765h35v-15M185 765v87h123l67-52-5-10M190 775v70M190 845h115M190 818l137-18v-28M265 755l-17 93M225 768l90-6"/>
              <path d="M405 800v35h18v-10h184v13h13v-33M372 800h50v22M520 792v13h125v-13M440 825q80 13 160 3M620 820q45-5 56-25v-53h12l2-17"/>
              <rect x="540" y="697" width="95" height="72" rx="22"/><rect x="548" y="708" width="78" height="52" rx="10"/><path d="M532 728h10v12h-10zM632 722h10v12h-10zM632 740h10v12h-10z"/><path d="M563 723h50M563 744h50" stroke="#000" stroke-width="2" stroke-dasharray="3 2"/>
              <path d="M980 378L590 720M975 790L500 994" stroke="#aaa"/>
              <path d="M960 238h145q43 7 43 52h18v22h-18v36h18v22h-18q0 45-43 55H960q-44-10-44-55v-30h-19v-18h19v-32q0-45 44-52zM975 265h115q30 8 33 38h-18v12h18v29h-18v14h18q-3 32-30 40H972q-28-8-30-40h15v-14h-15v-28h15v-16h-15q5-30 33-35M993 265v-18h77v18M1020 247v18M1045 247v18"/>
              <path d="M983 309h14M1009 309h13M1043 309h13M1072 309h13M983 356h14M1009 356h13M1043 356h13M1072 356h13" stroke="#000" stroke-width="2"/>
              <path d="M965 738h135l20 22 2 22 16 8v18l-16 4-22 33H970l-25-33-15-4v-18l15-8 3-24zM936 788v22M1132 788v22M993 738v-20h77v20M1008 738v-13h52v13"/><path d="M983 783h18v21h-18zM1025 783h18v21h-18zM1067 783h18v21h-18z" fill="#000"/>
              <path d="M1516 372q-30-65-69-117-27-27-107-35h-74v1047h152q42-12 60-52l38-80M1287 458h43q30 2 55 42 23 40 23 120v160q0 60-13 90-25 55-55 64h-53z"/>
            </g>
            <g class="art" fill="none" stroke="#5c5c5c" transform="translate(920 700) scale(.3827 .3333)">
              <path d="M142 150q3-40 15-55l8-50q3-17 13-17h62l10-6h35q15 13 23 33l32 97h107q14 8 14 33v50l-6 12h-65v-72h-18M142 150v65q6 20 18 32v83l7 40M160 247l37 80-30 38M197 252l46 83 27 32 8 53M270 367l60-32q8-15 9-40M270 370H137v54h156M190 424q60 86 165 179M265 424l85 101q15 17 32 23"/>
              <path d="M352 618l33-73q20-30 55-32l180-23q30-2 37 30l33 220q-5 50-28 70-12 5-22-7z"/>
              <path d="M447 152v-10h65v10h45v-7h35l13 182h27l3 13 7 5 6 33 17 17v140h20l25-33h63v10h-28l-33 33-22 17-15 4v64M663 392l8 13 2 90h-5M510 152v36h50v-36M500 178v12h66v-12M740 562l2-32 10-15 10 20v27h5v25h-42l-12 13q17 40 18 90-3 40-21 50h-18M710 740l-20 30M676 800h10v-28M715 550q5 18 8 18h29"/>
              <path d="M375 300l-3-10v-22q0-8 8-8h20l5 8h45v-8h5v8h8v-8h26l4 5h42l5-5h22q8 3 6 12v20l-4 8v145l5 8v25l-5 6H378l-6-6v-25l4-8z"/>
              <path d="M308 205v-20l7-19h50l7 19v20zM297 207h88v11h-88zM308 184h64M340 166v18M345 195v10"/><rect x="459" y="114" width="41" height="24" rx="12"/><path d="M465 138h32v5h-32zM468 118l5-6h15l6 6"/><path d="M468 126h24" stroke="#000" stroke-width="2" stroke-dasharray="2 2"/>
              <rect x="929" y="268" width="207" height="106" rx="36"/><path d="M1031 268v106M973 374v54h118v-54M1029 424v4M1036 424v4"/>
              <path d="M890 580h298v87H890zM965 580v87M1038 580v87M1114 580v171H963v-84M989 686h100v47H989z"/>
              <path d="M1516 448q-33 2-33 42v110q2 35 33 37"/><path d="M1503 489h13v18h-13zM1503 519h13v18h-13zM1503 549h13v16h-13zM1503 576h13v20h-13z" fill="#000"/>
            </g>
            <rect x="780.500" y="448.500" width="37" height="23" rx="1" fill="none" stroke="#3fcf3f" stroke-width="3"/>
           </g>
          </svg>
          </div>
          <div class="scroll-h px-1"><svg width="8" height="8"><use href="#left"/></svg><div class="flex-grow-1 h-100 mx-1"><div class="thumb h-100" style="width:13.500%;margin-left:66.200%"></div></div><svg width="8" height="8"><use href="#right"/></svg></div>
        </div>
        <div class="split-v"><svg width="7" height="40"><path d="M7 3v12L0 9zM0 15l7 6-7 6z" fill="#000"/></svg></div>
        <aside class="legend d-flex flex-column">
          <div class="legend-head">Легенда</div>
          <div class="legend-box d-flex flex-column flex-grow-1">
            <div class="legend-rows d-flex flex-grow-1">
              <ul class="legend-list d-flex flex-column flex-grow-1"><li>E21/4    Дополнительный фонарь сигнала торможения с плафоном</li><li>E3/1     Светодиодный модуль освещения сзади слева</li><li>E3/1     Светодиодный модуль освещения сзади слева</li><li>E4/1     Светодиодный модуль освещения сзади справа</li><li>E4/1     Светодиодный модуль освещения сзади справа</li><li>E5/1     Противотуманная фара слева</li><li>E5/1     Противотуманная фара слева</li><li>E5/2     Противотуманная фара справа</li><li class="on">E5/2     Противотуманная фара справа</li><li>K16/2    Реле фонаря заднего хода</li><li>K16/2    Реле фонаря заднего хода</li><li>K40/11   Модуль предохранителей и реле на моторном щите</li><li>K40/11   Модуль предохранителей и реле на моторном щите</li><li>K40/11   Модуль предохранителей и реле на моторном щите</li><li>K40/11f17Электрический предохранитель 17 передней левой фары</li><li>K40/11f18Электрический предохранитель 18 передней правой фары</li><li>K40/11f32Электрический предохранитель 32 (электр. цепь клеммы</li><li>K75/1    Реле стоп-сигналов</li><li>N10/1    Блок управления модуля обработки сигналов и управления</li><li>N10/1    Блок управления модуля обработки сигналов и управления</li><li>N10/1    Блок управления модуля обработки сигналов и управления</li><li>N50      Блок управления модуля предохранителей и реле (SSM)</li><li>N50      Блок управления модуля предохранителей и реле (SSM)</li><li>N50      Блок управления модуля предохранителей и реле (SSM)</li><li>N50      Блок управления модуля предохранителей и реле (SSM)</li><li>N50      Блок управления модуля предохранителей и реле (SSM)</li><li>N72/1    Блок управления верхней панели (</li></ul>
              <div class="scroll-v py-1"><svg width="8" height="8" class="mt-1"><use href="#up"/></svg><div class="thumb w-100" style="height:70px;margin-top:73px"></div><svg width="8" height="8" class="mt-auto"><use href="#down"/></svg></div>
            </div>
            <div class="scroll-h pe-4"><svg width="8" height="8" class="mx-1"><use href="#left"/></svg><div class="flex-grow-1 h-100 mx-1"><div class="thumb h-100" style="width:50%"></div></div><svg width="8" height="8"><use href="#right"/></svg></div>
          </div>
          <div class="finder">
            <label for="find" class="d-block">Найти</label>
            <input id="find" class="form-control">
            <label class="d-flex align-items-center mb-2 pb-1"><input type="checkbox" class="tick">Только условное обозначение</label>
            <button class="flat"><span class="next me-2"><svg width="21" height="21" class="d-block"><path d="M2 8h9V4l8 6-8 6v-4H2z" fill="#8a8a8a"/></svg></span>Продолжить поиск</button>
          </div>
        </aside>
      </div>
    </main>
  </div>
</div>
</div>

<footer class="taskbar d-flex align-items-center">
  <button class="flat task" aria-label="Пуск"><svg width="16" height="16"><path d="M0 2.500l6.500-1v6H0zM7.500 1.300L16 0v7.500H7.500zM0 8.500h6.500v6L0 13.600zM7.500 8.500H16V16l-8.500-1.300z" fill="#fff"/></svg></button>
  <button class="flat task" aria-label="1С"><svg width="22" height="24"><use href="#onec"/></svg></button>
  <button class="flat task" aria-label="Калькулятор"><svg width="18" height="24"><rect x=".5" y=".5" width="17" height="22" rx="1" fill="#9cc3e6" stroke="#d5e6f5"/><rect x="3" y="3" width="12" height="6" fill="#e9f5fc"/><path d="M3 12h12M3 15h12M3 18h12" stroke="#3d77b0" stroke-width="2" stroke-dasharray="2 1.300"/></svg></button>
  <button class="flat task open" aria-label="Outlook"><svg width="22" height="24"><rect width="22" height="22" rx="1" fill="#f0bd3c"/><path d="M10 0h12v22H6z" fill="#fbe9a8"/><ellipse cx="8" cy="10" rx="4.500" ry="6" fill="none" stroke="#b06c08" stroke-width="3"/><circle cx="17" cy="10" r="4" fill="#fff" stroke="#c98a1c"/><path d="M4 22l8-8 10 6" fill="none" stroke="#fff" stroke-width="2"/></svg></button>
  <button class="flat task open" aria-label="Chrome"><svg width="22" height="24" viewBox="0 0 22 24"><ellipse cx="11" cy="12" rx="11" ry="11.500" fill="#f4c20d"/><path d="M1.500 6Q5 .5 11 .5T20.500 6.500H11L6 14z" fill="#db4437"/><path d="M1.500 6Q-1 12 1.500 17T10 23.400L15 15 8 15z" fill="#0f9d58"/><circle cx="11" cy="12" r="5.300" fill="#fff"/><circle cx="11" cy="12" r="4.200" fill="#4285f4"/></svg></button>
  <button class="flat task open" aria-label="1С"><svg width="22" height="24"><use href="#onec"/></svg></button>
  <button class="flat task now" aria-label="WIS"><svg width="24" height="24"><rect width="24" height="24" fill="#cddcc6"/><use href="#lift" x="2" y="1" width="20" height="23"/></svg></button>
  <button class="flat task open me-auto" aria-label="Paint"><svg width="26" height="26"><path d="M2 18Q0 8 12 5q12 0 11 8-2 3-6 2-3 1-1 5-2 5-8 4-5-1-6-6z" fill="#dfe8ee"/><circle cx="6" cy="14" r="2" fill="#3b6fb5"/><circle cx="9" cy="9.500" r="2" fill="#59a84b"/><circle cx="15" cy="9" r="2" fill="#d83a30"/><circle cx="8" cy="19" r="2" fill="#e9a33b"/><path d="M12 24L22 5" stroke="#c98b4e" stroke-width="2"/><path d="M20 6l1-5 5 2-3 5z" fill="#e8c9a0"/></svg></button>
  <button class="flat me-2" aria-label="Скрытые значки"><svg width="14" height="12"><path d="M1 9l6-6 6 6" fill="none" stroke="#fff"/></svg></button>
  <svg width="18" height="16" class="me-2"><path d="M5 3.500h11.500v8H5M8 14.500h6M11 11.500v3" fill="none" stroke="#fff"/><rect x="1.500" y="1.500" width="4" height="4" fill="none" stroke="#fff"/><path d="M3.500 5.500v9" stroke="#fff"/></svg>
  <svg width="18" height="16" class="me-2"><path d="M1.500 5.500h3l3-3v11l-3-3h-3zM10 5.500q2 2.500 0 5M12.500 4q3 4 0 8M15 2.500q3.500 5.500 0 11" fill="none" stroke="#fff"/></svg>
  <span class="me-2">РУС</span>
  <div class="clock px-1"><div>13:16</div><div>12.10.2022</div></div>
  <span class="deskedge"></span>
</footer>

<svg class="over" viewBox="0 0 1920 1089" preserveAspectRatio="xMinYMin meet">
  <g fill="none" stroke="#a2383e" stroke-width="3"><ellipse cx="812.500" cy="713.500" rx="55" ry="294"/><ellipse cx="1671" cy="591.500" rx="209" ry="37.500"/></g>
  <text class="wm" x="1392" y="965" font-size="19">Активация Windows</text>
  <text class="wm" x="1392" y="985" font-size="14">Чтобы активировать Windows, перейдите в раздел "Параметры".</text>
</svg>

<script>
// Column ruler: one tick and one number per schematic column, top and bottom.
const NS = "http://www.w3.org/2000/svg", ruler = document.getElementById("ruler");
for (let i = 0; i < 28; i++) {
  const x = Math.round(76.3 + i * 52.24) + 0.5;
  const p = document.createElementNS(NS, "path");
  p.setAttribute("d", `M${x} 417v10M${x} 1003v10`);
  ruler.append(p);
  if (i < 27) for (const y of [425, 1011]) {
    const t = document.createElementNS(NS, "text");
    t.setAttribute("class", "r"); t.setAttribute("x", x + 27); t.setAttribute("y", y);
    t.setAttribute("fill", "#000"); t.setAttribute("stroke", "none");
    t.textContent = 133 + i;
    ruler.append(t);
  }
}
</script>
</body>
</html>
